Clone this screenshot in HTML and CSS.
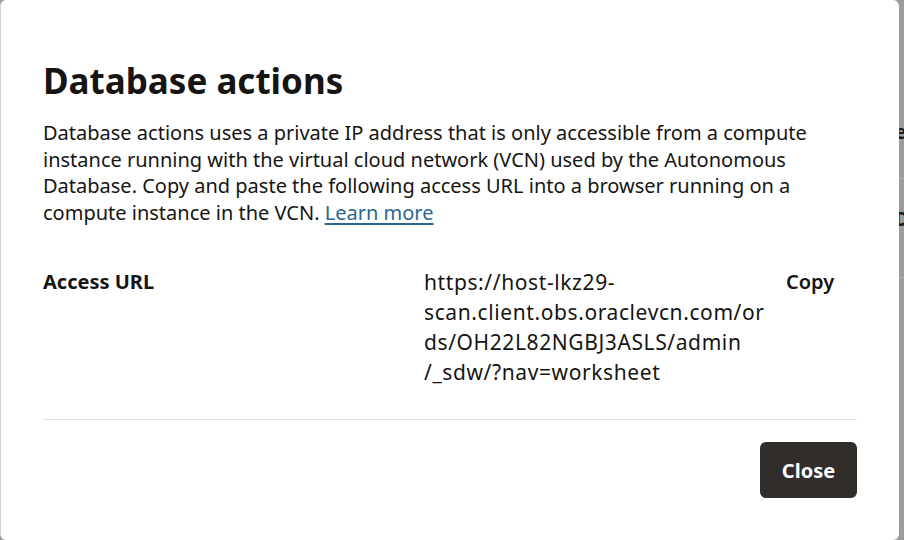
FILE: index.html
```html
<!DOCTYPE html>
<html lang="en">
<head>
<meta charset="utf-8">
<title>Database actions</title>
<link rel="stylesheet" href="styles.css">
</head>
<body>
<div class="dialog" role="dialog" aria-labelledby="dlg-title">
  <h1 class="title" id="dlg-title">Database actions</h1>
  <p class="intro">Database actions uses a private IP address that is only accessible from a compute instance running with the virtual cloud network (VCN) used by the Autonomous Database. Copy and paste the following access URL into a browser running on a compute instance in the VCN. <a class="link" href="#">Learn more</a></p>
  <div class="row">
    <div class="label">Access URL</div>
    <div class="url"><span class="seg">https://host-lkz29-</span><wbr><span class="seg">scan.client.obs.oraclevcn.com/or</span><wbr><span class="seg">ds/OH22L82NGBJ3ASLS/admin</span><wbr><span class="seg">/_sdw/?nav=worksheet</span></div>
    <div class="copy">Copy</div>
  </div>
  <div class="footer">
    <button class="btn" type="button">Close</button>
  </div>
</div>
<div class="behind">
  <div class="frag frag-e">e</div>
  <div class="frag-line"></div>
  <div class="frag frag-d">D</div>
  <div class="frag-line second"></div>
</div>
</body>
</html>
```

FILE: styles.css
```css
html, body {
  margin: 0;
  padding: 0;
  height: 540px;
  overflow: hidden;
}
body {
  display: flex;
  background: #9c9c9c;
  font-family: "Noto Sans", "Open Sans", sans-serif;
  color: #161513;
}
.dialog {
  width: 899px;
  height: 540px;
  flex: none;
  box-sizing: border-box;
  background: #ffffff;
  border-radius: 6px;
  border-left: 1px solid #d4d4d4;
  padding: 60px 42px 0 42px;
  display: flex;
  flex-direction: column;
}
.title {
  margin: 0;
  font-size: 35px;
  line-height: 42px;
  font-weight: 700;
}
.intro {
  margin: 18px 0 0 0;
  font-size: 20px;
  line-height: 26.7px;
}
.link {
  color: #2a6690;
  text-decoration: underline;
  text-underline-offset: 3px;
}
.row {
  margin-top: 40px;
  display: grid;
  grid-template-columns: 381px 362px 1fr;
  font-size: 20px;
  line-height: 30px;
  padding-bottom: 32px;
  border-bottom: 1px solid #e4e1dd;
}
.label {
  font-weight: 700;
}
.url {
  padding-right: 8px;
  font-size: 21px;
  letter-spacing: 0.6px;
}
.seg {
  white-space: nowrap;
}
.copy {
  font-weight: 600;
}
.footer {
  display: flex;
  justify-content: flex-end;
  padding-top: 22px;
}
.btn {
  width: 97px;
  height: 56px;
  border: none;
  border-radius: 6px;
  background: #312d2a;
  color: #ffffff;
  font-family: inherit;
  font-size: 20px;
  font-weight: 700;
  padding-top: 3px;
  cursor: pointer;
}
.behind {
  flex: 1;
  overflow: hidden;
  display: flex;
  flex-direction: column;
}
.frag {
  font-size: 19px;
  font-weight: 700;
  color: #1e1e1e;
  line-height: 20px;
  margin-left: -4px;
}
.frag-e { margin-top: 122px; }
.frag-line {
  margin-top: 36px;
  height: 1px;
  background: #b0b0b0;
}
.frag-d { margin-top: 30px; }
.frag-line.second { margin-top: 48px; }
```
